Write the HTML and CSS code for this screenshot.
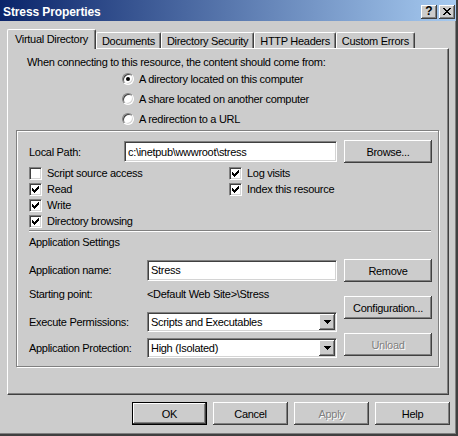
FILE: index.html
```html
<!DOCTYPE html>
<html>
<head>
<meta charset="utf-8">
<link rel="stylesheet" href="styles.css">
</head>
<body>
<div class="window">
  <div class="titlebar">
    <span class="title">Stress Properties</span>
    <div class="tbtns">
      <span class="tbtn help">?</span>
      <span class="tbtn"><svg width="8" height="7" viewBox="0 0 8 7" shape-rendering="crispEdges"><path d="M0 0h2v1h-2zM6 0h2v1h-2zM1 1h2v1h-2zM5 1h2v1h-2zM2 2h4v1h-4zM3 3h2v1h-2zM2 4h4v1h-4zM1 5h2v1h-2zM5 5h2v1h-2zM0 6h2v1h-2zM6 6h2v1h-2z" fill="#000"/></svg></span>
    </div>
  </div>

  <div class="tabs">
    <div class="tab sel">Virtual Directory</div>
    <div class="tab">Documents</div>
    <div class="tab">Directory Security</div>
    <div class="tab">HTTP Headers</div>
    <div class="tab">Custom Errors</div>
  </div>

  <div class="panel">
    <p class="intro">When connecting to this resource, the content should come from:</p>
    <div class="radios">
      <div class="radio"><span class="rb on"></span>A directory located on this computer</div>
      <div class="radio"><span class="rb"></span>A share located on another computer</div>
      <div class="radio"><span class="rb"></span>A redirection to a URL</div>
    </div>

    <div class="group">
      <div class="pathrow">
        <span class="plabel">Local Path:</span>
        <div class="field pathfield">c:\inetpub\wwwroot\stress</div>
        <div class="btn side">Browse...</div>
      </div>

      <div class="checks">
        <div class="ccol left">
          <div class="check"><span class="box"></span>Script source access</div>
          <div class="check"><span class="box"><svg class="tick" width="7" height="7" viewBox="0 0 7 7" shape-rendering="crispEdges"><path d="M0 2H1V3H2V4H3V3H4V2H5V1H6V0H7V3H6V4H5V5H4V6H3V7H2V6H1V5H0Z" fill="#000"/></svg></span>Read</div>
          <div class="check"><span class="box"><svg class="tick" width="7" height="7" viewBox="0 0 7 7" shape-rendering="crispEdges"><path d="M0 2H1V3H2V4H3V3H4V2H5V1H6V0H7V3H6V4H5V5H4V6H3V7H2V6H1V5H0Z" fill="#000"/></svg></span>Write</div>
          <div class="check"><span class="box"><svg class="tick" width="7" height="7" viewBox="0 0 7 7" shape-rendering="crispEdges"><path d="M0 2H1V3H2V4H3V3H4V2H5V1H6V0H7V3H6V4H5V5H4V6H3V7H2V6H1V5H0Z" fill="#000"/></svg></span>Directory browsing</div>
        </div>
        <div class="ccol">
          <div class="check"><span class="box"><svg class="tick" width="7" height="7" viewBox="0 0 7 7" shape-rendering="crispEdges"><path d="M0 2H1V3H2V4H3V3H4V2H5V1H6V0H7V3H6V4H5V5H4V6H3V7H2V6H1V5H0Z" fill="#000"/></svg></span>Log visits</div>
          <div class="check"><span class="box"><svg class="tick" width="7" height="7" viewBox="0 0 7 7" shape-rendering="crispEdges"><path d="M0 2H1V3H2V4H3V3H4V2H5V1H6V0H7V3H6V4H5V5H4V6H3V7H2V6H1V5H0Z" fill="#000"/></svg></span>Index this resource</div>
        </div>
      </div>

      <div class="sep"></div>
      <div class="heading">Application Settings</div>

      <div class="app">
        <div class="appgrid">
          <span>Application name:</span>
          <div class="field">Stress</div>
          <span class="sp">Starting point:</span>
          <span class="sp">&lt;Default Web Site&gt;\Stress</span>
          <span>Execute Permissions:</span>
          <div class="field select"><span>Scripts and Executables</span><span class="arrow"><svg width="7" height="4" viewBox="0 0 7 4" shape-rendering="crispEdges"><path d="M0 0h7v1h-1v1h-1v1h-1v1h-1v-1h-1v-1h-1v-1h-1z" fill="#000"/></svg></span></div>
          <span>Application Protection:</span>
          <div class="field select"><span>High (Isolated)</span><span class="arrow"><svg width="7" height="4" viewBox="0 0 7 4" shape-rendering="crispEdges"><path d="M0 0h7v1h-1v1h-1v1h-1v1h-1v-1h-1v-1h-1v-1h-1z" fill="#000"/></svg></span></div>
        </div>
        <div class="appbtns">
          <div class="btn side">Remove</div>
          <div class="btn side">Configuration...</div>
          <div class="btn side disabled">Unload</div>
        </div>
      </div>
    </div>
  </div>

  <div class="buttons">
    <div class="btn dlg default">OK</div>
    <div class="btn dlg">Cancel</div>
    <div class="btn dlg disabled">Apply</div>
    <div class="btn dlg">Help</div>
  </div>
</div>
</body>
</html>
```

FILE: styles.css
```css
* { box-sizing: border-box; }

body {
  margin: 0;
  background: #cccccc;
  font-family: "Liberation Sans", Arial, sans-serif;
  font-size: 11px;
  letter-spacing: -0.3px;
  color: #000;
}

.window {
  width: 458px;
  height: 436px;
  background: #cccccc;
  border-right: 2px solid #404040;
  border-bottom: 2px solid #404040;
  box-shadow: inset -1px -1px #808080;
  display: flex;
  flex-direction: column;
}

/* title bar */
.titlebar {
  height: 21px;
  padding: 2px 1px 0 3px;
  display: flex;
  align-items: center;
  justify-content: space-between;
  background: linear-gradient(to right, #0a246a, #a6caf0);
}
.title {
  color: #fff;
  font-weight: bold;
  font-size: 12px;
  letter-spacing: -0.1px;
}
.tbtns { display: flex; gap: 2px; }
.tbtn {
  width: 16px;
  height: 14px;
  display: flex;
  align-items: center;
  justify-content: center;
  background: #cccccc;
  box-shadow: inset -1px -1px #404040, inset 1px 1px #fff, inset -2px -2px #808080;
}
.tbtn.help {
  font-weight: bold;
  font-size: 12px;
  letter-spacing: 0;
  padding-bottom: 1px;
}

/* tabs */
.tabs {
  height: 27px;
  padding-left: 7px;
  display: flex;
  align-items: flex-end;
}
.tab {
  height: 16px;
  padding: 0 5px;
  display: flex;
  align-items: center;
  border-top: 1px solid #fff;
  border-left: 1px solid #fff;
  border-right: 1px solid #404040;
  border-radius: 2px 2px 0 0;
  box-shadow: inset -1px 0 #808080;
  white-space: nowrap;
}
.tab.sel {
  height: 20px;
  margin-bottom: -1px;
  padding: 0 7px 1px;
  position: relative;
  z-index: 1;
  background: #cccccc;
}

/* panel */
.panel {
  margin: 0 7px 0 7px;
  height: 347px;
  border: 1px solid;
  border-color: #fff #404040 #404040 #fff;
  box-shadow: inset -1px -1px #808080;
  padding: 0 9px 0 8px;
}
.intro {
  margin: 7px 0 0 11px;
  line-height: 13px;
}
.radios { margin-left: 106px; }
.radio {
  height: 20px;
  display: flex;
  align-items: center;
  gap: 5px;
}
.rb {
  width: 12px;
  height: 12px;
  border-radius: 50%;
  background: #fff;
  border: 1px solid;
  border-color: #808080 #fff #fff #808080;
  box-shadow: inset 1px 1px #404040, inset -1px -1px #d4d4d4;
  display: flex;
  align-items: center;
  justify-content: center;
}
.rb.on::after {
  content: "";
  width: 4px;
  height: 4px;
  border-radius: 50%;
  background: #000;
}

/* group box */
.group {
  margin-top: 1px;
  border: 1px solid #808080;
  box-shadow: inset 1px 1px #fff, 1px 1px #fff;
  padding: 9px 6px 5px 12px;
}
.pathrow {
  height: 23px;
  display: flex;
  align-items: center;
}
.plabel { width: 95px; }
.field {
  height: 21px;
  background: #fff;
  border: 1px solid;
  border-color: #808080 #fff #fff #808080;
  box-shadow: inset 1px 1px #404040, inset -1px -1px #d4d4d4;
  padding: 0 3px;
  display: flex;
  align-items: center;
  white-space: nowrap;
}
.pathfield { width: 213px; }

.checks {
  margin-top: 2px;
  display: flex;
}
.ccol.left { width: 200px; }
.check {
  height: 16px;
  display: flex;
  align-items: center;
  gap: 5px;
}
.box {
  width: 13px;
  height: 13px;
  background: #fff;
  border: 1px solid;
  border-color: #808080 #fff #fff #808080;
  box-shadow: inset 1px 1px #404040, inset -1px -1px #d4d4d4;
  display: flex;
  align-items: center;
  justify-content: center;
}
.tick { display: block; }

.sep {
  margin-top: 1px;
  margin-right: 1px;
  height: 2px;
  border-top: 1px solid #808080;
  border-bottom: 1px solid #fff;
}
.heading {
  margin-top: 3px;
  line-height: 14px;
}

.app {
  margin-top: 8px;
  display: flex;
}
.appgrid {
  display: grid;
  grid-template-columns: 118px 190px;
  grid-auto-rows: 26px;
  align-items: center;
}
.appgrid .field { width: 190px; }
.appgrid .sp { padding-bottom: 4px; }
.field.select {
  height: 20px;
  padding: 0 1px 0 3px;
  justify-content: space-between;
}
.arrow {
  width: 16px;
  height: 16px;
  display: flex;
  align-items: center;
  justify-content: center;
  background: #cccccc;
  box-shadow: inset -1px -1px #404040, inset 1px 1px #fff, inset -2px -2px #808080;
}
.appbtns {
  margin-left: 7px;
  margin-top: 2px;
  display: flex;
  flex-direction: column;
  gap: 14px;
}

/* buttons */
.btn {
  height: 23px;
  display: flex;
  align-items: center;
  justify-content: center;
  background: #cccccc;
  box-shadow: inset -1px -1px #404040, inset 1px 1px #fff, inset -2px -2px #808080;
  white-space: nowrap;
}
.btn.side { width: 88px; margin-left: 7px; }
.appbtns .btn.side { margin-left: 0; }
.btn.dlg { width: 75px; }
.btn.default {
  border: 1px solid #000;
}
.btn.disabled {
  color: #808080;
  text-shadow: 1px 1px #fff;
}

.buttons {
  margin-top: 7px;
  padding-right: 6px;
  display: flex;
  justify-content: flex-end;
  gap: 6px;
}
```
